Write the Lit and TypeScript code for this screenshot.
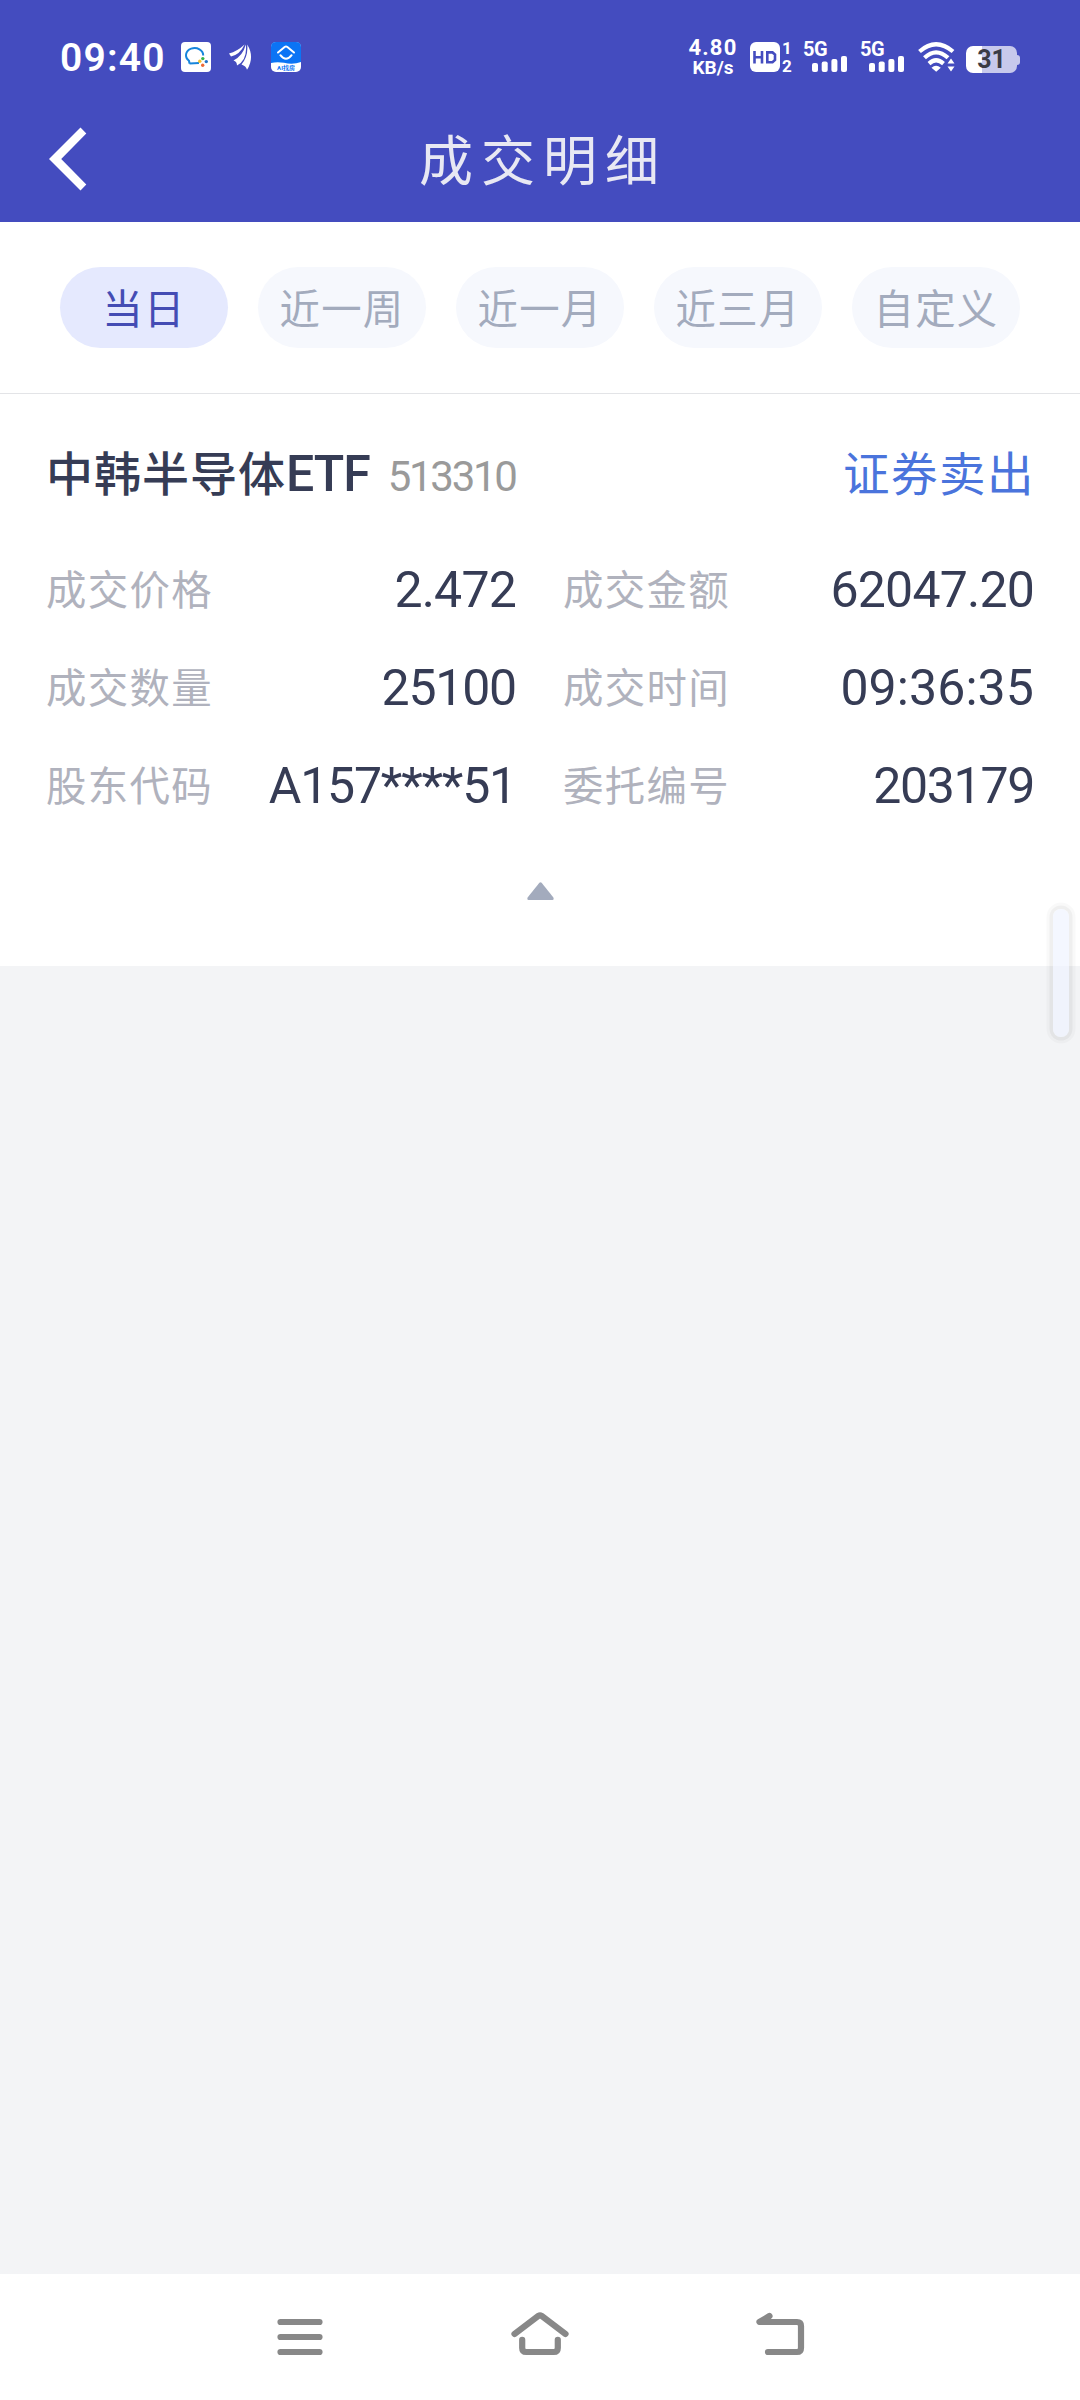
import { LitElement, html, css, svg } from "lit";
import { customElement, property } from "lit/decorators.js";
import { classMap } from "lit/directives/class-map.js";

interface Field {
  label: string;
  value: string;
  tracking: number;
}

const RANGES = ["当日", "近一周", "近一月", "近三月", "自定义"];

const FIELDS: Field[] = [
  { label: "成交价格", value: "2.472", tracking: -0.8 },
  { label: "成交金额", value: "62047.20", tracking: -0.8 },
  { label: "成交数量", value: "25100", tracking: -1.2 },
  { label: "成交时间", value: "09:36:35", tracking: 0.1 },
  { label: "股东代码", value: "A157****51", tracking: -1.2 },
  { label: "委托编号", value: "203179", tracking: -1.3 },
];

const bars = svg`
  <rect x="0" y="7" width="6" height="9" rx="2"/>
  <rect x="9.7" y="5.5" width="6" height="10.5" rx="2"/>
  <rect x="19.4" y="3" width="6" height="13" rx="2"/>
  <rect x="29" y="0" width="6" height="16" rx="2"/>`;

@customElement("status-bar")
class StatusBar extends LitElement {
  static styles = css`
    :host {
      display: flex;
      align-items: center;
      justify-content: space-between;
      height: 98px;
      padding: 16px 60px 0 60px;
      box-sizing: border-box;
      color: #fff;
      font-family: Roboto, "Noto Sans CJK SC", sans-serif;
    }
    svg {
      display: block;
      flex: none;
    }
    .left,
    .right {
      display: flex;
      align-items: center;
    }
    .clock {
      width: 121px;
      font-size: 39px;
      font-weight: 600;
      letter-spacing: 1.2px;
      line-height: 42px;
      padding-top: 1px;
      white-space: nowrap;
    }
    .feather {
      margin: 0 19px 0 18px;
    }
    .speed {
      display: flex;
      flex-direction: column;
      align-items: center;
      width: 50px;
      font-weight: 700;
      white-space: nowrap;
    }
    .rate {
      font-size: 22px;
      line-height: 20px;
      letter-spacing: 1.2px;
    }
    .unit {
      font-size: 19px;
      line-height: 19px;
    }
    .hd {
      margin-left: 12px;
    }
    .sims {
      display: flex;
      flex-direction: column;
      align-items: center;
      width: 12px;
      margin-left: 1px;
      font-size: 17px;
      font-weight: 700;
      line-height: 18px;
    }
    .signal {
      display: flex;
      flex-direction: column;
      width: 46px;
      height: 30px;
      margin-left: 10px;
    }
    .signal + .signal {
      margin-left: 11px;
    }
    .gen {
      font-size: 20px;
      font-weight: 700;
      line-height: 14px;
      height: 14px;
      letter-spacing: -0.5px;
    }
    .signal svg {
      margin-left: 9px;
    }
    .wifi {
      margin-left: 12px;
    }
    .battery {
      display: flex;
      align-items: center;
      margin: 5px 0 0 11px;
    }
    .cell {
      width: 51px;
      height: 27px;
      border-radius: 7px;
      background: linear-gradient(to right, #fff 16px, #c7c9ec 16px);
      color: #3a3b45;
      font-size: 25px;
      font-weight: 700;
      line-height: 28px;
      text-align: center;
    }
    .nub {
      width: 3px;
      height: 10px;
      border-radius: 0 3px 3px 0;
      background: #c7c9ec;
    }
  `;

  render() {
    return html`
      <div class="left">
        <span class="clock">09:40</span>
        <svg width="30" height="30" viewBox="0 0 30 30">
          <rect width="30" height="30" rx="4" fill="#fff" />
          <path d="M8.5 21.5 L8 18.7 A8.6 7.2 0 1 1 22.2 13.5 M8.5 21.5 Q14 21 18 21" fill="none" stroke="#1685dc" stroke-width="2" stroke-linejoin="round" />
          <circle cx="21.8" cy="16.6" r="1.7" fill="#35b44a" />
          <circle cx="25.3" cy="19.6" r="1.7" fill="#2376c8" />
          <circle cx="18.8" cy="19.3" r="1.7" fill="#f2c230" />
          <circle cx="21.7" cy="23.2" r="1.7" fill="#ee6a35" />
        </svg>
        <svg class="feather" width="23" height="26" viewBox="0 0 23 26">
          <path d="M0 9.5 Q8 7.5 15.6 0.5 Q11 10.5 2 12.5 Z M4.5 16.5 Q14 11.5 16.8 0.5 Q18.6 16 8 21.5 Q8 17.5 4.5 16.5 Z M12.5 20.5 Q19.5 12 18.2 0.5 Q26 13 18 25.8 Q17 22 12.5 20.5 Z" fill="#fff" />
        </svg>
        <svg width="30" height="30" viewBox="0 0 30 30">
          <rect width="30" height="30" rx="5" fill="#fff" />
          <path d="M0 21 V5 Q0 0 5 0 H25 Q30 0 30 5 V20 Q22 23 13 20.8 Q6 19.4 0 21 Z" fill="#0b74f5" />
          <path d="M7 10.5 L13.6 5 Q15 4 16.4 5 L23 10.5 M9.4 13.2 Q15 20.5 20.6 13.2" fill="none" stroke="#fff" stroke-width="2" stroke-linecap="round" />
          <text x="15" y="28" text-anchor="middle" font-size="6" font-weight="700" fill="#0b74f5">AI找房</text>
        </svg>
      </div>
      <div class="right">
        <div class="speed">
          <span class="rate">4.80</span>
          <span class="unit">KB/s</span>
        </div>
        <svg class="hd" width="30" height="30" viewBox="0 0 30 30">
          <rect width="30" height="30" rx="6" fill="#fff" />
          <path d="M4.5 9 V21.5 M12 9 V21.5 M4.5 15.2 H12 M17.3 10.4 H22.5 L25 12.5 V18 L22.5 20.2 H17.3 Z" fill="none" stroke="#444cbf" stroke-width="2.6" />
        </svg>
        <div class="sims"><span>1</span><span>2</span></div>
        ${[0, 1].map(
          () => html`<div class="signal">
            <span class="gen">5G</span>
            <svg width="36" height="16" viewBox="0 0 36 16" fill="#fff">${bars}</svg>
          </div>`
        )}
        <svg class="wifi" width="37" height="30" viewBox="0 0 37 30">
          <g fill="none" stroke="#fff" stroke-width="4.2">
            <path d="M1.5 9.5 Q18 -5 35 9.5" />
            <path d="M6.5 15.8 Q18 5 30 15.8" />
            <path d="M11 21.6 Q18 15 25.5 21.6" />
          </g>
          <path d="M13.5 25.7 Q18 22 22.8 25.7 L18.2 29.8 Z M29.5 21.5 L33 16.5 L36.5 21.5 Z M29.5 24.5 H36.5 L33 29.5 Z" fill="#fff" />
        </svg>
        <div class="battery">
          <div class="cell">31</div>
          <div class="nub"></div>
        </div>
      </div>
    `;
  }
}

@customElement("trade-card")
class TradeCard extends LitElement {
  @property({ attribute: false }) fields: Field[] = [];

  static styles = css`
    :host {
      display: block;
      height: 572px;
      padding: 50px 45px 0 46px;
      box-sizing: border-box;
      background: #fff;
      font-family: Roboto, "Noto Sans CJK SC", sans-serif;
    }
    .head {
      display: flex;
      align-items: baseline;
      height: 96px;
      line-height: 60px;
      white-space: nowrap;
    }
    .name {
      color: #363c55;
      font-size: 47px;
      font-weight: 500;
      letter-spacing: 1px;
    }
    .ticker {
      font-size: 50px;
      letter-spacing: -1px;
    }
    .code {
      margin-left: 18px;
      color: #9a9a9a;
      font-size: 42px;
      letter-spacing: -2.3px;
    }
    .side {
      margin-left: auto;
      color: #4a74dc;
      font-size: 46.5px;
      letter-spacing: 1.5px;
    }
    .grid {
      display: grid;
      grid-template-columns: 470px 471px;
      column-gap: 47px;
      grid-auto-rows: 98px;
    }
    .field {
      display: flex;
      justify-content: space-between;
      align-items: center;
      white-space: nowrap;
    }
    .label {
      margin-top: -3px;
      color: #b0b2bd;
      font-size: 40.4px;
      letter-spacing: 1.4px;
    }
    .value {
      padding-top: 2px;
      color: #363c55;
      font-size: 50px;
    }
    .fold {
      display: block;
      margin: 48px auto 0;
    }
  `;

  render() {
    return html`
      <div class="head">
        <span class="name">中韩半导体<span class="ticker">ETF</span></span>
        <span class="code">513310</span>
        <span class="side">证券卖出</span>
      </div>
      <div class="grid">
        ${this.fields.map(
          (f) => html`<div class="field">
            <span class="label">${f.label}</span>
            <span class="value" style="letter-spacing:${f.tracking}px">${f.value}</span>
          </div>`
        )}
      </div>
      <svg class="fold" width="27" height="18" viewBox="0 0 27 18">
        <path d="M12.4 0.8 Q13.5 -0.4 14.6 0.8 L26.4 15.4 Q27.2 18 25.5 18 H1.5 Q-0.2 18 0.6 15.4 Z" fill="#a3abbd" />
      </svg>
    `;
  }
}

@customElement("nav-keys")
class NavKeys extends LitElement {
  static styles = css`
    :host {
      display: flex;
      justify-content: center;
      gap: 180px;
      height: 126px;
      padding-top: 33px;
      box-sizing: border-box;
      background: #fff;
    }
    svg {
      display: block;
      fill: none;
      stroke: #888;
      stroke-width: 6.2;
      stroke-linecap: round;
      stroke-linejoin: round;
    }
  `;

  render() {
    return html`
      <svg width="60" height="60" viewBox="270 2307 60 60">
        <path d="M280.5 2322 H319.5 M280.5 2337 H319.5 M280.5 2352 H319.5" />
      </svg>
      <svg width="60" height="60" viewBox="510 2307 60 60">
        <path d="M514.5 2334 L538.5 2315.8 Q540 2314.8 541.5 2315.8 L565.5 2334 M522.2 2339.8 V2348 Q522.2 2352 526.2 2352 H553.8 Q557.8 2352 557.8 2348 V2339.8" />
      </svg>
      <svg width="60" height="60" viewBox="750 2307 60 60">
        <path d="M769.5 2316 L759.5 2322 H797 Q801 2322 801 2326 V2348 Q801 2352 797 2352 H768" />
      </svg>
    `;
  }
}

@customElement("app-root")
class AppRoot extends LitElement {
  static styles = css`
    :host {
      display: flex;
      flex-direction: column;
      position: relative;
      width: 1080px;
      height: 2400px;
      background: #f3f4f6;
      font-family: Roboto, "Noto Sans CJK SC", sans-serif;
    }
    .header {
      height: 222px;
      background: #444cbf;
    }
    .titlebar {
      display: grid;
      grid-template-columns: 100px 1fr 100px;
      align-items: center;
      height: 120px;
    }
    .back {
      display: block;
      margin: 2px 0 0 49px;
    }
    .title {
      color: #e8e8f3;
      font-size: 54px;
      letter-spacing: 8px;
      text-align: center;
      white-space: nowrap;
      padding: 10px 0 0 6px;
      line-height: 80px;
    }
    .ranges {
      display: flex;
      gap: 30px;
      height: 172px;
      padding: 45px 60px 0;
      box-sizing: border-box;
      border-bottom: 1px solid #e3e4e7;
      background: #fff;
    }
    .chip {
      flex: 1;
      height: 81px;
      padding-top: 3px;
      box-sizing: border-box;
      border-radius: 41px;
      background: #f6f8fd;
      color: #a3abbd;
      font-size: 40.4px;
      letter-spacing: 1.3px;
      line-height: 81px;
      text-align: center;
      white-space: nowrap;
    }
    .chip.active {
      background: #e5e9fe;
      color: #444cb4;
    }
    .spacer {
      flex: 1;
    }
    .handle {
      position: absolute;
      top: 909px;
      right: 11px;
      width: 16px;
      height: 128px;
      border-radius: 8px;
      background: rgba(238, 242, 255, 0.65);
      box-shadow: 0 0 0 3.5px rgba(0, 0, 0, 0.04), 0 0 0 6.5px rgba(0, 0, 0, 0.025);
    }
  `;

  render() {
    return html`
      <div class="header">
        <status-bar></status-bar>
        <div class="titlebar">
          <svg class="back" width="38" height="64" viewBox="0 0 38 64">
            <path d="M31.5 0.5 L37.3 6.5 L12.2 32 L37.3 57.5 L31.5 63.5 L0 32 Z" fill="#fff" />
          </svg>
          <span class="title">成交明细</span>
        </div>
      </div>
      <div class="ranges">
        ${RANGES.map((r, i) => html`<div class=${classMap({ chip: true, active: i === 0 })}>${r}</div>`)}
      </div>
      <trade-card .fields=${FIELDS}></trade-card>
      <div class="spacer"></div>
      <nav-keys></nav-keys>
      <div class="handle"></div>
    `;
  }
}
